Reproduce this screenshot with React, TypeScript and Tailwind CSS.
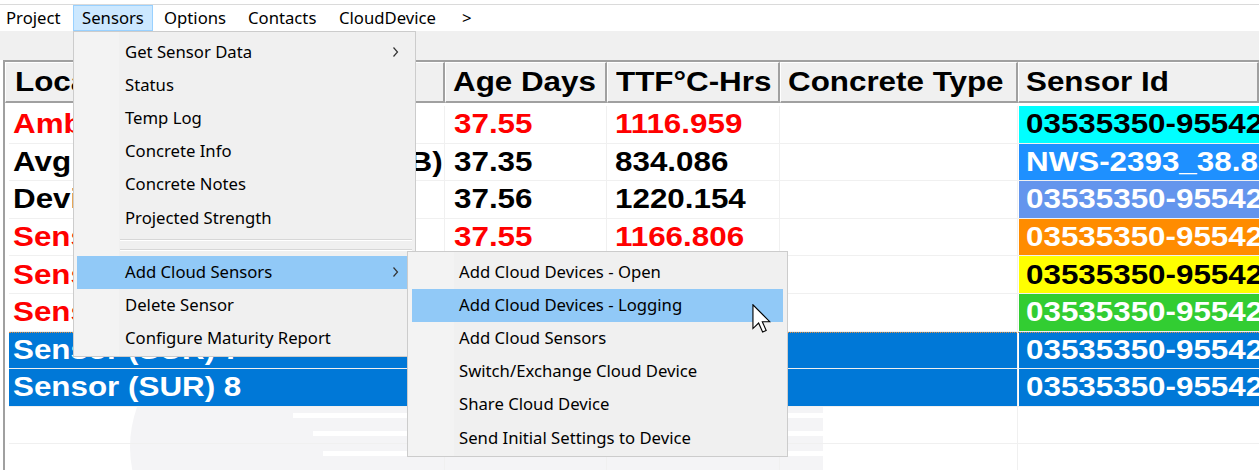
import React from 'react';

type Row = {
    loc: string;
    age: string;
    ttf: string;
    tone: 'red' | 'black';
    idBg: string;
    idText: string;
    id: string;
    selected?: boolean;
    focus?: boolean;
};

const rows: Row[] = [
    { loc: 'Ambient Temp', age: '37.55', ttf: '1116.959', tone: 'red', idBg: 'bg-[#00ffff]', idText: 'text-black', id: '03535350-955421' },
    { loc: 'Avg Sensor Temp (SUR W-B)', age: '37.35', ttf: '834.086', tone: 'black', idBg: 'bg-[#1e90ff]', idText: 'text-white', id: 'NWS-2393_38.85' },
    { loc: 'Device Temp', age: '37.56', ttf: '1220.154', tone: 'black', idBg: 'bg-[#6495ed]', idText: 'text-white', id: '03535350-955422' },
    { loc: 'Sensor (SUR) 4', age: '37.55', ttf: '1166.806', tone: 'red', idBg: 'bg-[#ff8c00]', idText: 'text-white', id: '03535350-955423' },
    { loc: 'Sensor (SUR) 5', age: '37.55', ttf: '1150.412', tone: 'red', idBg: 'bg-[#ffff00]', idText: 'text-black', id: '03535350-955424' },
    { loc: 'Sensor (SUR) 6', age: '37.55', ttf: '1139.027', tone: 'red', idBg: 'bg-[#32cd32]', idText: 'text-white', id: '03535350-955425' },
    { loc: 'Sensor (SUR) 7', age: '37.55', ttf: '1128.660', tone: 'red', idBg: 'bg-[#0078d7]', idText: 'text-white', id: '03535350-955426', selected: true, focus: true },
    { loc: 'Sensor (SUR) 8', age: '37.55', ttf: '1131.245', tone: 'red', idBg: 'bg-[#0078d7]', idText: 'text-white', id: '03535350-955427', selected: true },
];

const mainItems = [
    { label: 'Get Sensor Data', arrow: true },
    { label: 'Status' },
    { label: 'Temp Log' },
    { label: 'Concrete Info' },
    { label: 'Concrete Notes' },
    { label: 'Projected Strength' },
    { sep: true },
    { sep: true },
    { label: 'Add Cloud Sensors', arrow: true, active: true },
    { label: 'Delete Sensor' },
    { label: 'Configure Maturity Report' },
];

const subItems = [
    { label: 'Add Cloud Devices - Open' },
    { label: 'Add Cloud Devices - Logging', active: true },
    { label: 'Add Cloud Sensors' },
    { label: 'Switch/Exchange Cloud Device' },
    { label: 'Share Cloud Device' },
    { label: 'Send Initial Settings to Device' },
];

const Wide = ({ children }: { children: React.ReactNode }) => (
    <span className="inline-block origin-left scale-x-[1.12] whitespace-nowrap">{children}</span>
);

const Chevron = () => (
    <svg width="7" height="11" viewBox="0 0 7 11" className="absolute right-[13px] top-1/2 -translate-y-1/2">
        <polyline points="1.5,1 5.5,5.5 1.5,10" fill="none" stroke="#333" strokeWidth="1.2" />
    </svg>
);

const App = () => {
    return (
        <div className="relative w-[1259px] h-[470px] overflow-hidden bg-white font-['Noto_Sans',sans-serif] text-black">
            {/* title edge */}
            <div className="h-[4px] bg-white" />
            <div className="h-px bg-[#dadada]" />

            {/* menubar */}
            <div className="flex h-[26px] items-stretch bg-white text-[16.7px] leading-none">
                <div className="flex w-[73px] items-center pl-[6px]">Project</div>
                <div className="flex w-[80px] items-center border border-[#99d1ff] bg-[#cce8ff] pl-[8px]">Sensors</div>
                <div className="flex w-[84px] items-center pl-[11px]">Options</div>
                <div className="flex w-[91px] items-center pl-[11px]">Contacts</div>
                <div className="flex w-[123px] items-center pl-[11px]">CloudDevice</div>
                <div className="flex items-center pl-[11px]">&gt;</div>
            </div>

            {/* toolbar band */}
            <div className="h-[29px] bg-[#f0f0f0]" />

            {/* grid */}
            <div className="relative ml-[3px] h-[420px] border-l-2 border-t-2 border-[#a0a0a0] font-['Liberation_Sans',Arial,sans-serif] text-[28px] font-bold leading-none">
                <div className="flex h-[41px] bg-[#f0f0f0]">
                    {[
                        ['Location', 'w-[440px] pl-[9px]'],
                        ['Age Days', 'w-[162px] pl-[7px]'],
                        ['TTF°C-Hrs', 'w-[173px] pl-[8px]'],
                        ['Concrete Type', 'w-[238px] pl-[7px]'],
                        ['Sensor Id', 'flex-1 pl-[7px]'],
                    ].map(([label, cls]) => (
                        <div
                            key={label}
                            className={`flex shrink-0 items-center overflow-hidden border-t border-l border-white border-r-2 border-b-2 border-r-[#a0a0a0] border-b-[#a0a0a0] ${cls}`}
                        >
                            <Wide>{label}</Wide>
                        </div>
                    ))}
                </div>

                {/* faint watermark behind the empty rows */}
                <svg className="pointer-events-none absolute left-[118px] top-[345px]" width="720" height="80" viewBox="0 0 720 80">
                    <path d="M14 0 H700 V80 H14 Q0 40 14 0 Z" fill="#f4f4f6" />
                    <rect x="170" y="6" width="540" height="5" fill="#ffffff" />
                    <rect x="190" y="24" width="520" height="5" fill="#ffffff" />
                    <rect x="200" y="44" width="510" height="5" fill="#ffffff" />
                    <rect x="215" y="64" width="495" height="5" fill="#ffffff" />
                </svg>

                <div className="relative pt-[3px]">
                    {rows.map((r) => {
                        const txt = r.selected ? 'text-white' : r.tone === 'red' ? 'text-[#ff0000]' : 'text-black';
                        const bg = r.selected ? 'bg-[#0078d7]' : 'bg-white';
                        return (
                            <div key={r.loc} className="relative flex h-[37.6px] pl-[4px]">
                                <div className={`flex w-[436px] shrink-0 items-center overflow-hidden border-b border-r border-[#f0f0f0] pl-[4px] ${bg} ${txt}`}>
                                    <Wide>{r.loc}</Wide>
                                </div>
                                <div className={`flex w-[162px] shrink-0 items-center overflow-hidden border-b border-r border-[#f0f0f0] pl-[9px] ${bg} ${txt}`}>
                                    <Wide>{r.age}</Wide>
                                </div>
                                <div className={`flex w-[173px] shrink-0 items-center overflow-hidden border-b border-r border-[#f0f0f0] pl-[8px] ${bg} ${txt}`}>
                                    <Wide>{r.ttf}</Wide>
                                </div>
                                <div className={`w-[238px] shrink-0 border-b border-r border-[#f0f0f0] ${bg}`} />
                                <div className="flex-1 overflow-hidden border-b border-[#f0f0f0] bg-white pl-px">
                                    <div className={`flex h-full items-center pl-[7px] ${r.idBg} ${r.idText}`}>
                                        <Wide>{r.id}</Wide>
                                    </div>
                                </div>
                                {r.focus && (
                                    <div className="pointer-events-none absolute left-[4px] right-0 top-0 border-t border-dotted border-[#e09040]" />
                                )}
                            </div>
                        );
                    })}
                    {[0, 1].map((i) => (
                        <div key={i} className="flex h-[37.6px] pl-[4px]">
                            <div className="w-[436px] shrink-0 border-b border-r border-[#f0f0f0]" />
                            <div className="w-[162px] shrink-0 border-b border-r border-[#f0f0f0]" />
                            <div className="w-[173px] shrink-0 border-b border-r border-[#f0f0f0]" />
                            <div className="w-[238px] shrink-0 border-b border-r border-[#f0f0f0]" />
                            <div className="flex-1 border-b border-[#f0f0f0]" />
                        </div>
                    ))}
                </div>
            </div>

            {/* Sensors dropdown */}
            <div className="absolute left-[73px] top-[31px] w-[343px] border border-[#cccccc] bg-[#f0f0f0] px-[3px] pt-[3.4px] pb-[1px] text-[16.7px] leading-none">
                <div className="absolute inset-y-0 left-0 w-[45px] bg-[#f3f3f3]" />
                {mainItems.map((it, i) =>
                    it.sep ? (
                        <div key={i} className="relative flex h-[10.55px] items-center">
                            <div className="ml-[43px] h-[2px] flex-1 border-t border-[#d7d7d7] border-b border-b-white" />
                        </div>
                    ) : (
                        <div
                            key={i}
                            className={`relative flex h-[33.2px] items-center pl-[48px] ${it.active ? 'bg-[#91c9f7]' : ''}`}
                        >
                            {it.label}
                            {it.arrow && <Chevron />}
                        </div>
                    )
                )}
            </div>

            {/* Add Cloud Sensors submenu */}
            <div className="absolute left-[407px] top-[251px] w-[381px] border border-[#cccccc] bg-[#f0f0f0] px-[4px] pt-[3.4px] pb-[1.4px] text-[16.7px] leading-none">
                <div className="absolute inset-y-0 left-0 w-[46px] bg-[#f3f3f3]" />
                {subItems.map((it) => (
                    <div
                        key={it.label}
                        className={`relative flex h-[33.2px] items-center pl-[47px] ${it.active ? 'bg-[#91c9f7]' : ''}`}
                    >
                        {it.label}
                    </div>
                ))}
            </div>

            {/* mouse pointer */}
            <svg className="pointer-events-none absolute left-[752px] top-[304px]" width="19" height="29" viewBox="0 0 12.5 19.5">
                <path
                    d="M0.5 0.5 L0.5 16.5 L4.3 12.8 L7 18.8 L9.4 17.8 L6.8 11.9 L11.8 11.9 Z"
                    fill="#ffffff"
                    stroke="#000000"
                    strokeWidth="0.75"
                    strokeLinejoin="miter"
                />
            </svg>
        </div>
    );
};

export default App;
